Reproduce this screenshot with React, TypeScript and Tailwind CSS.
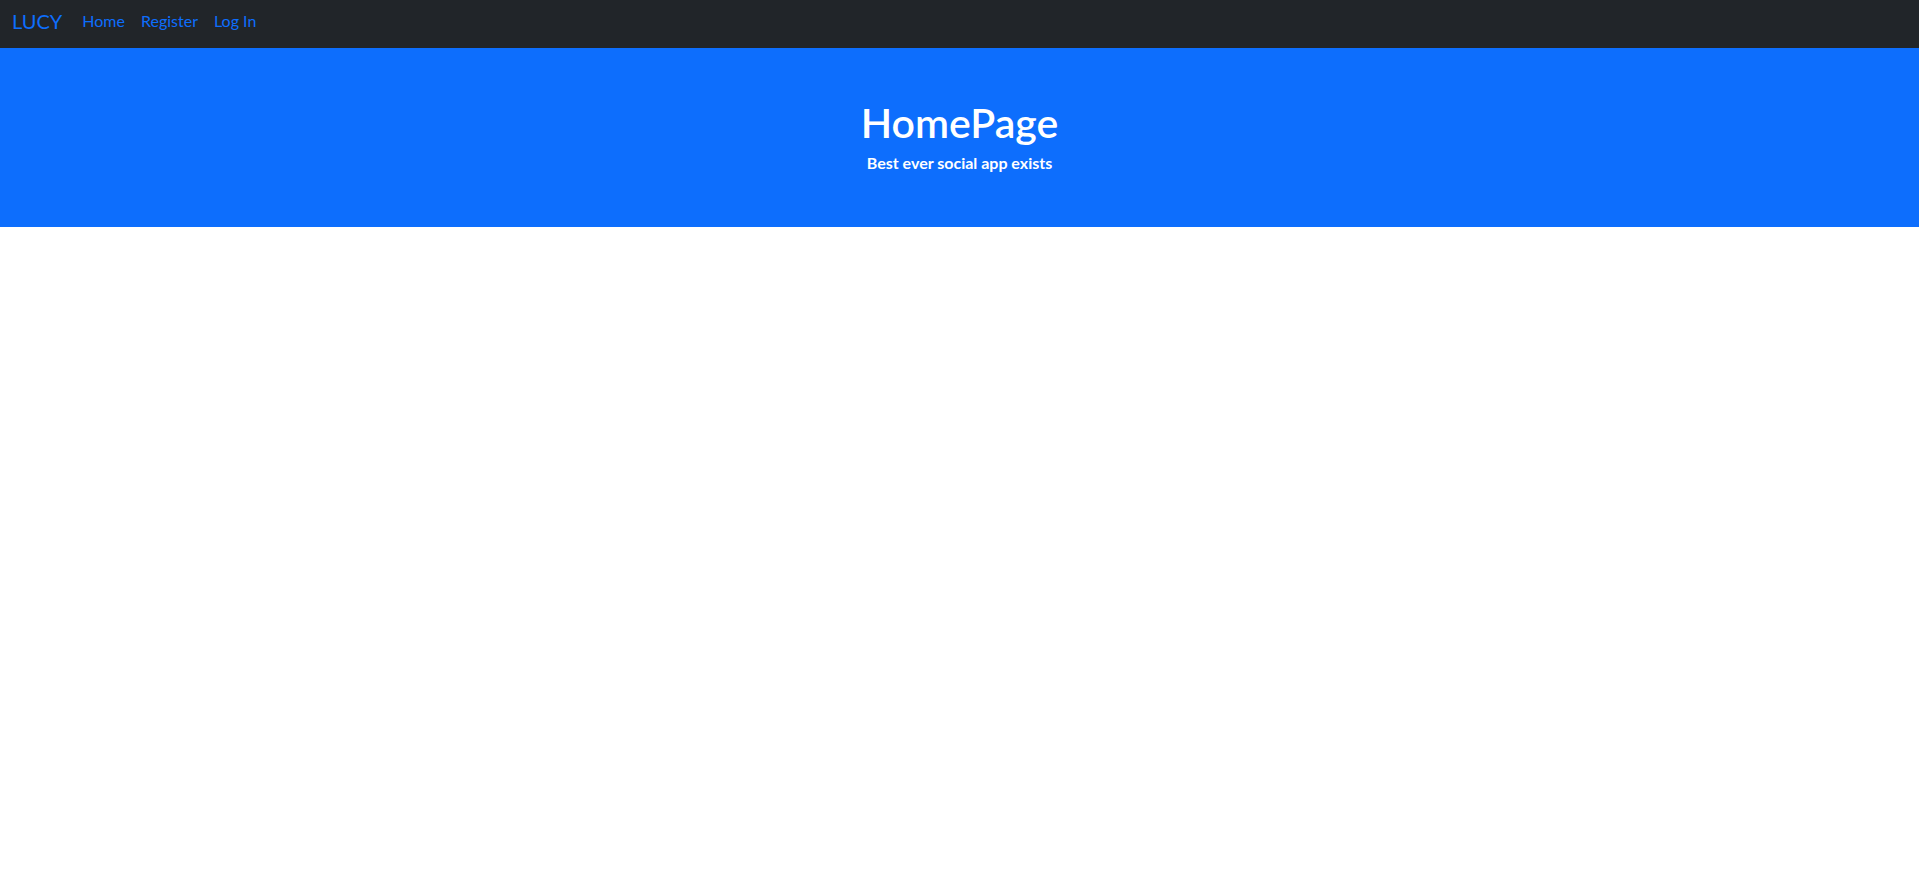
import React from 'react';

export default function App() {
  return (
    <div className="min-h-[896px] bg-white" style={{ fontFamily: 'Lato, "Noto Sans", sans-serif' }}>
      {/* Navbar */}
      <nav className="flex items-center h-[48px] bg-[#212529] px-3 pb-[6px]">
        <a href="#" className="text-[#0d6efd] text-[20px] mr-[12px] leading-none">LUCY</a>
        <div className="flex items-center text-[16px] text-[#0d6efd]">
          <a href="#" className="px-2">Home</a>
          <a href="#" className="px-2">Register</a>
          <a href="#" className="px-2">Log In</a>
        </div>
      </nav>

      {/* Hero */}
      <div className="bg-[#0d6efd] text-white text-center h-[179px] pt-[50px]">
        <h1 className="text-[41px] font-semibold leading-[1.2] mb-[4px]">HomePage</h1>
        <p className="text-[16px] font-bold">Best ever social app exists</p>
      </div>
    </div>
  );
}
